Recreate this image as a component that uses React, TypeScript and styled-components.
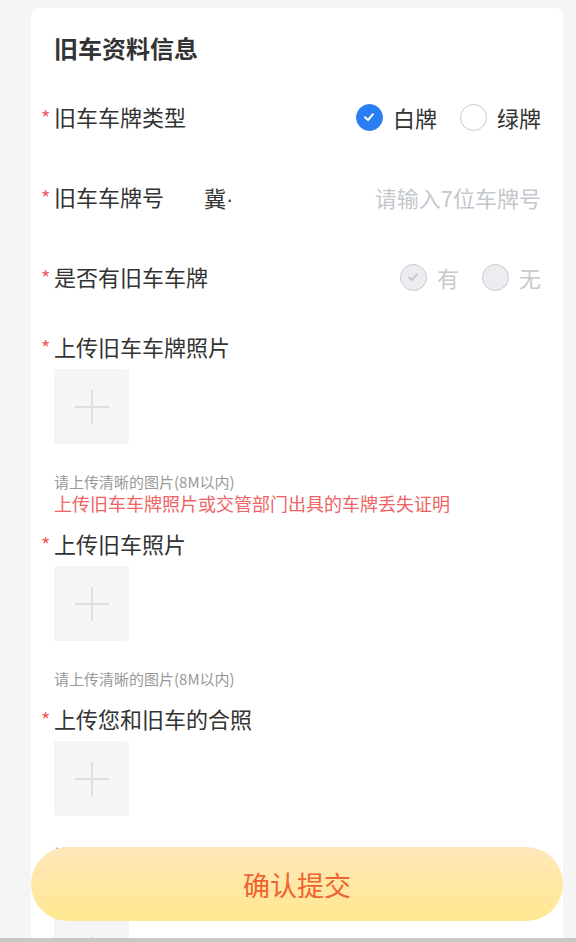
import React from "react";
import styled, { createGlobalStyle } from "styled-components";

const GlobalStyle = createGlobalStyle`
  body {
    margin: 0;
    background: #f5f5f5;
    font-family: "Noto Sans CJK SC", "Noto Sans", sans-serif;
    color: #333;
  }
`;

const Check = ({ color }: { color: string }) => (
  <svg width="14" height="14" viewBox="0 0 14 14">
    <path
      d="M3 7.2 L6 10 L11 4.2"
      fill="none"
      stroke={color}
      strokeWidth="2"
      strokeLinecap="round"
      strokeLinejoin="round"
    />
  </svg>
);

const Plus = () => (
  <svg width="36" height="36" viewBox="0 0 36 36">
    <path d="M18 1 V35 M1 18 H35" stroke="#dcdee0" strokeWidth="2" />
  </svg>
);

type RadioProps = { label: string; checked?: boolean; disabled?: boolean };

const Radio = ({ label, checked, disabled }: RadioProps) => (
  <RadioItem>
    <Circle $checked={checked} $disabled={disabled}>
      {checked && <Check color={disabled ? "#c8c9cc" : "#fff"} />}
    </Circle>
    <RadioText $disabled={disabled}>{label}</RadioText>
  </RadioItem>
);

const Upload = ({ label, hint, warn }: { label: string; hint?: string; warn?: string }) => (
  <UploadField>
    <Label>
      <Star>*</Star>
      {label}
    </Label>
    <UploadBox>
      <Plus />
    </UploadBox>
    {hint && <Hint>{hint}</Hint>}
    {warn && <Warn>{warn}</Warn>}
  </UploadField>
);

const App = () => {
  const hint = "请上传清晰的图片(8M以内)";
  return (
    <>
      <GlobalStyle />
      <Card>
        <Title>旧车资料信息</Title>
        <Row>
          <Label>
            <Star>*</Star>旧车车牌类型
          </Label>
          <RadioGroup>
            <Radio label="白牌" checked />
            <Radio label="绿牌" />
          </RadioGroup>
        </Row>
        <Row>
          <PlateLabel>
            <Star>*</Star>旧车车牌号
          </PlateLabel>
          <Prefix>冀·</Prefix>
          <Placeholder>请输入7位车牌号</Placeholder>
        </Row>
        <Row>
          <Label>
            <Star>*</Star>是否有旧车车牌
          </Label>
          <RadioGroup>
            <Radio label="有" checked disabled />
            <Radio label="无" disabled />
          </RadioGroup>
        </Row>
        <Upload
          label="上传旧车车牌照片"
          hint={hint}
          warn="上传旧车车牌照片或交管部门出具的车牌丢失证明"
        />
        <Upload label="上传旧车照片" hint={hint} />
        <Upload label="上传您和旧车的合照" hint={hint} />
        <Upload label="上传旧车行驶证照片" />
      </Card>
      <SubmitButton>确认提交</SubmitButton>
      <BottomBar />
    </>
  );
};

const Card = styled.div`
  margin: 8px 13px 0 31px;
  padding: 24px 22px 140px 23px;
  background: #fff;
  border-radius: 8px;
`;

const Title = styled.div`
  font-size: 24px;
  line-height: 32px;
  font-weight: 700;
  color: #333;
  margin-bottom: 13px;
`;

const Row = styled.div`
  display: flex;
  align-items: center;
  height: 80px;
`;

const Star = styled.span`
  display: inline-block;
  width: 13px;
  margin-left: -13px;
  color: #ee5b5b;
  font-size: 20px;
  text-align: left;
`;

const Label = styled.div`
  font-size: 22px;
  line-height: 30px;
  color: #333;
  white-space: nowrap;
`;

const PlateLabel = styled(Label)`
  width: 150px;
`;

const Prefix = styled.span`
  font-family: "Liberation Sans", "Noto Sans CJK SC", sans-serif;
  font-size: 22px;
  color: #333;
`;

const Placeholder = styled.span`
  margin-left: auto;
  font-size: 22px;
  color: #c4c7cc;
`;

const RadioGroup = styled.div`
  display: flex;
  align-items: center;
  gap: 23px;
  margin-left: auto;
`;

const RadioItem = styled.div`
  display: flex;
  align-items: center;
  gap: 10px;
`;

const Circle = styled.span<{ $checked?: boolean; $disabled?: boolean }>`
  display: flex;
  align-items: center;
  justify-content: center;
  box-sizing: border-box;
  width: 27px;
  height: 27px;
  border-radius: 50%;
  border: 1px solid
    ${(p) => (p.$disabled ? "#c8c9cc" : p.$checked ? "#2a7ef4" : "#c8c9cc")};
  background: ${(p) => (p.$disabled ? "#ebedf0" : p.$checked ? "#2a7ef4" : "#fff")};
`;

const RadioText = styled.span<{ $disabled?: boolean }>`
  font-size: 22px;
  line-height: 30px;
  color: ${(p) => (p.$disabled ? "#c8c9cc" : "#333")};
`;

const UploadField = styled.div`
  padding-top: 14px;
`;

const UploadBox = styled.div`
  display: flex;
  align-items: center;
  justify-content: center;
  width: 75px;
  height: 75px;
  margin-top: 6px;
  background: #f4f5f7;
  border-radius: 2px;
`;

const Hint = styled.div`
  margin-top: 28px;
  font-size: 15px;
  line-height: 20px;
  color: #999;
`;

const Warn = styled.div`
  font-size: 18px;
  line-height: 22px;
  color: #ee6363;
`;

const SubmitButton = styled.button`
  position: fixed;
  left: 31px;
  right: 13px;
  bottom: 21px;
  height: 74px;
  border: none;
  border-radius: 37px;
  background: linear-gradient(180deg, #ffe7bb 0%, #ffe890 100%);
  color: #f0622f;
  font-family: "Noto Sans CJK SC", sans-serif;
  font-size: 27px;
  cursor: pointer;
`;

const BottomBar = styled.div`
  position: fixed;
  left: 0;
  right: 0;
  bottom: 0;
  height: 4px;
  background: #c9c9c4;
`;

export default App;
